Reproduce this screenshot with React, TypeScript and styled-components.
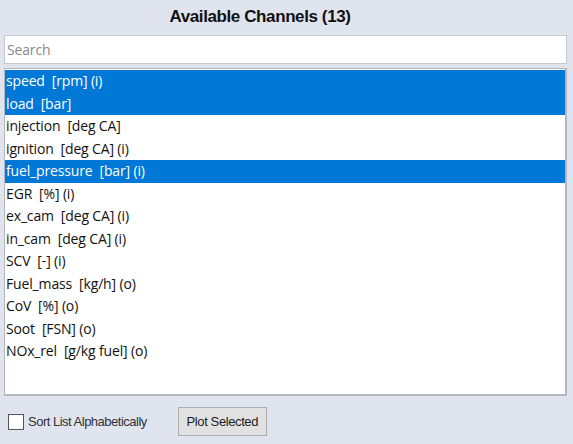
import React, { useState } from "react";
import styled, { createGlobalStyle } from "styled-components";

const GlobalStyle = createGlobalStyle`
    html, body {
        margin: 0;
        padding: 0;
        background: #dfe4ee;
    }
`;

const Wrapper = styled.div`
    width: 573px;
    height: 444px;
    box-sizing: border-box;
    padding: 0 6px 0 4px;
    display: flex;
    flex-direction: column;
    background: #dfe4ee;
`;

const TitleHeader = styled.h1`
    margin: 0;
    height: 33px;
    line-height: 33px;
    padding-right: 51px;
    text-align: center;
    font-family: "Liberation Sans", Arial, sans-serif;
    font-size: 17px;
    letter-spacing: -0.4px;
    font-weight: 700;
    color: #111;
`;

const SearchInput = styled.input`
    box-sizing: border-box;
    height: 29px;
    margin-top: 2px;
    width: 100%;
    padding: 0 2px;
    font-family: "Open Sans", "Noto Sans", sans-serif;
    font-size: 14px;
    letter-spacing: -0.15px;
    color: #000;
    background: #fff;
    border: 1px solid #c4c8d0;
    outline: none;

    &::placeholder {
        color: #8a8a8a;
    }
`;

const ListBox = styled.div`
    box-sizing: border-box;
    margin-top: 4px;
    height: 328px;
    background: #fff;
    border: 1px solid #b4b7bf;
    border-right-width: 2px;
    border-bottom-width: 2px;
    padding-top: 1px;
    overflow: hidden;
`;

const Row = styled.div<{ selected?: boolean }>`
    height: 22.5px;
    line-height: 22.5px;
    padding-left: 1px;
    font-family: "Open Sans", "Noto Sans", sans-serif;
    font-size: 14px;
    letter-spacing: -0.15px;
    white-space: pre;
    color: ${({ selected }) => (selected ? "#fff" : "#111")};
    background: ${({ selected }) => (selected ? "#0078d7" : "transparent")};
    cursor: default;
`;

const Footer = styled.div`
    display: flex;
    align-items: center;
    padding: 11px 0 0 4px;
`;

const CheckLabel = styled.label`
    display: flex;
    align-items: center;
    gap: 4px;
    font-family: "Liberation Sans", Arial, sans-serif;
    font-size: 13px;
    letter-spacing: -0.5px;
    color: #333;
`;

const CheckBox = styled.span`
    box-sizing: border-box;
    width: 16px;
    height: 16px;
    background: #fff;
    border: 1px solid #555;
`;

const Button = styled.button`
    box-sizing: border-box;
    margin-left: 31px;
    width: 89px;
    height: 29px;
    font-family: "Liberation Sans", Arial, sans-serif;
    font-size: 13px;
    letter-spacing: -0.4px;
    color: #222;
    background: #e1e1e1;
    border: 1px solid #adadad;
    border-radius: 0;
    padding: 0;
`;

const channels: [string, boolean][] = [
    ["speed  [rpm] (i)", true],
    ["load  [bar]", true],
    ["injection  [deg CA]", false],
    ["ignition  [deg CA] (i)", false],
    ["fuel_pressure  [bar] (i)", true],
    ["EGR  [%] (i)", false],
    ["ex_cam  [deg CA] (i)", false],
    ["in_cam  [deg CA] (i)", false],
    ["SCV  [-] (i)", false],
    ["Fuel_mass  [kg/h] (o)", false],
    ["CoV  [%] (o)", false],
    ["Soot  [FSN] (o)", false],
    ["NOx_rel  [g/kg fuel] (o)", false]
];

export default function App() {
    const [search, setSearch] = useState("");
    return (
        <>
            <GlobalStyle />
            <Wrapper>
                <TitleHeader>Available Channels (13)</TitleHeader>
                <SearchInput
                    placeholder="Search"
                    value={search}
                    onChange={(e) => setSearch(e.target.value)}
                />
                <ListBox>
                    {channels.map(([name, sel]) => (
                        <Row key={name} selected={sel}>
                            {name}
                        </Row>
                    ))}
                </ListBox>
                <Footer>
                    <CheckLabel>
                        <CheckBox />
                        Sort List Alphabetically
                    </CheckLabel>
                    <Button>Plot Selected</Button>
                </Footer>
            </Wrapper>
        </>
    );
}
